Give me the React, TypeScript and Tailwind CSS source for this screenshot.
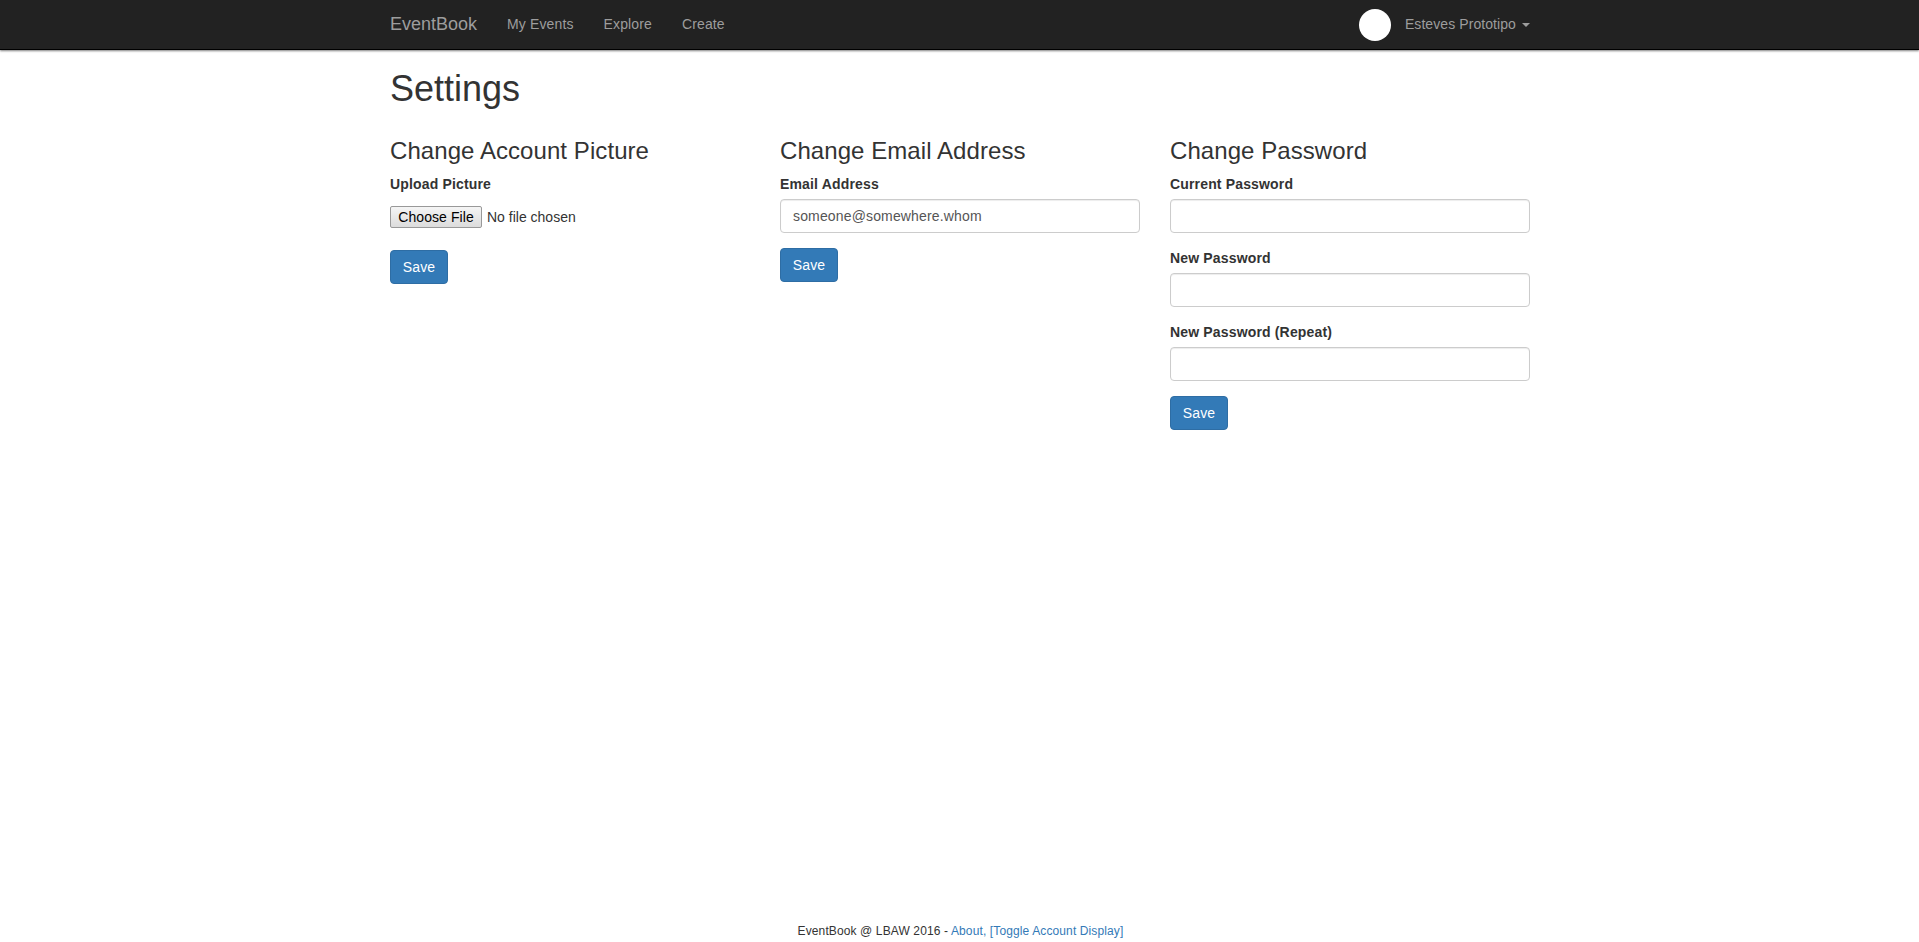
import type { ReactNode } from "react";

function NavLink({ children }: { children: ReactNode }) {
  return (
    <a href="#" className="px-[15px] py-[14px] leading-5 tracking-[0.13px] text-[#9d9d9d]">
      {children}
    </a>
  );
}

function Column({ title, children }: { title: string; children: ReactNode }) {
  return (
    <section className="px-[15px]">
      <h3 className="mt-5 mb-2.5 text-2xl leading-[26.4px] tracking-[0.07px]">{title}</h3>
      {children}
    </section>
  );
}

function Label({ children, htmlFor }: { children: ReactNode; htmlFor: string }) {
  return (
    <label htmlFor={htmlFor} className="mb-[5px] block w-fit leading-5 font-bold tracking-[0.16px]">
      {children}
    </label>
  );
}

function Field({ id, label, type, value }: { id: string; label: string; type: string; value?: string }) {
  return (
    <div className="mb-[15px]">
      <Label htmlFor={id}>{label}</Label>
      <input
        id={id}
        type={type}
        defaultValue={value}
        className="block h-[34px] w-full rounded border border-[#ccc] bg-white px-3 py-1.5 tracking-[0.15px] text-[#555] shadow-[inset_0_1px_1px_rgba(0,0,0,0.075)] outline-none"
      />
    </div>
  );
}

function SaveButton() {
  return (
    <button className="h-[34px] w-[58px] rounded border border-[#2e6da4] bg-[#337ab7] text-center leading-5 tracking-[0.1px] text-white">
      Save
    </button>
  );
}

export default function App() {
  return (
    <div className="flex h-screen flex-col bg-white font-['Liberation_Sans',Arial,sans-serif] text-sm text-[#333]">
      <nav className="h-[50px] shrink-0 border-b border-black bg-[#222] shadow-[0_1px_2px_rgba(0,0,0,0.5)]">
        <div className="mx-auto flex h-[49px] w-[1169px] pr-[14px] pl-[15px]">
          <a href="#" className="mr-[15px] h-[49px] py-[14px] text-lg leading-5 text-[#9d9d9d]">
            EventBook
          </a>
          <NavLink>My Events</NavLink>
          <NavLink>Explore</NavLink>
          <NavLink>Create</NavLink>
          <div className="ml-auto flex">
            <span className="mt-[9px] mr-[14px] h-8 w-8 rounded-full bg-white" />
            <a href="#" className="flex py-[14px] leading-5 tracking-[0.08px] text-[#9d9d9d]">
              Esteves Prototipo
              <span className="mt-[9px] ml-1.5 h-0 w-0 border-x-4 border-t-4 border-x-transparent border-t-[#9d9d9d]" />
            </a>
          </div>
        </div>
      </nav>
      <main className="mx-auto w-[1169px] grow pt-[19px]">
        <h1 className="mb-[9px] px-[15px] text-[36px] leading-[39.6px]">Settings</h1>
        <div className="grid grid-cols-[390px_390px_390px]">
          <Column title="Change Account Picture">
            <Label htmlFor="picture">Upload Picture</Label>
            <div className="mt-3 mb-[22px] flex h-[22px] items-center">
              <button
                id="picture"
                className="mr-[5px] h-[22px] w-[92px] rounded-[2px] border border-[#999] bg-linear-to-b from-[#f5f5f5] to-[#dcdcdc] leading-5 tracking-[0.08px] text-black"
              >
                Choose File
              </button>
              <span>No file chosen</span>
            </div>
            <SaveButton />
          </Column>
          <Column title="Change Email Address">
            <Field id="email" label="Email Address" type="email" value="someone@somewhere.whom" />
            <SaveButton />
          </Column>
          <Column title="Change Password">
            <Field id="current" label="Current Password" type="password" />
            <Field id="new" label="New Password" type="password" />
            <Field id="repeat" label="New Password (Repeat)" type="password" />
            <SaveButton />
          </Column>
        </div>
      </main>
      <footer className="mb-[2px] pl-0.5 text-center text-xs leading-[17px] tracking-[0.12px]">
        EventBook @ LBAW 2016 -{" "}
        <a href="#" className="text-[#337ab7]">About</a>
        <span className="text-[#337ab7]">, </span>
        <a href="#" className="text-[#337ab7]">[Toggle Account Display]</a>
      </footer>
    </div>
  );
}
